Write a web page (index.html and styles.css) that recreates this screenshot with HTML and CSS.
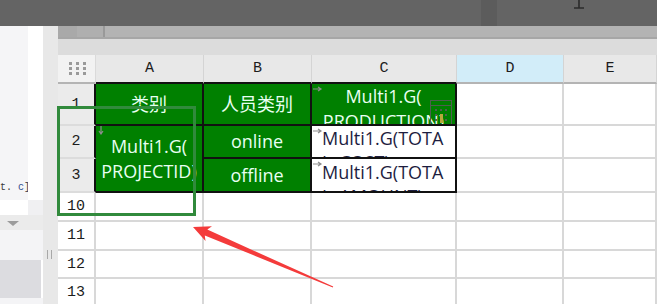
FILE: index.html
```html
<!DOCTYPE html>
<html lang="en">
<head>
    <meta charset="UTF-8">
    <meta name="viewport" content="width=device-width, initial-scale=1.0">
    <title>Sheet</title>
    <link rel="stylesheet" href="styles.css">
</head>
<body>
    <div class="topbar">
        <div class="topbar-tab"></div>
        <svg class="topbar-mark" width="12" height="9" viewBox="0 0 12 9"><path d="M6 0V8M1 8H11" stroke="#2b2b2b" stroke-width="1.6" fill="none"/></svg>
    </div>
    <div class="main">
        <div class="side">
            <div class="side-top">
                <div class="side-code"><span class="code-line"><span class="code-dark">t.</span> <span class="code-blue">c</span><span class="code-dark">]</span></span></div>
                <div class="side-white"></div>
            </div>
            <div class="side-row2"><div class="side-w"></div><div class="side-g"></div></div>
            <div class="side-drop"><span class="tri"></span></div>
            <div class="side-light"></div>
            <div class="side-box"></div>
            <div class="side-rest"></div>
        </div>
        <div class="splitter"><span class="grip"></span></div>
        <div class="sheet">
            <div class="sheet-toolbar">
                <div class="tb-first"></div>
                <div class="tb-second"></div>
            </div>
            <div class="sheet-sub"></div>
            <div class="grid">
                <div class="corner">
                    <svg width="18" height="14" viewBox="0 0 18 14">
                        <g fill="#9a9a9a">
                            <rect x="0" y="0" width="3" height="3"/><rect x="7" y="0" width="3" height="3"/><rect x="14" y="0" width="3" height="3"/>
                            <rect x="0" y="5" width="3" height="3"/><rect x="7" y="5" width="3" height="3"/><rect x="14" y="5" width="3" height="3"/>
                            <rect x="0" y="10" width="3" height="3"/><rect x="7" y="10" width="3" height="3"/><rect x="14" y="10" width="3" height="3"/>
                        </g>
                    </svg>
                </div>
                <div class="colhead edge">A</div>
                <div class="colhead edge">B</div>
                <div class="colhead edge">C</div>
                <div class="colhead active">D</div>
                <div class="colhead">E</div>

                <div class="rowhead sel">1</div>
                <div class="cell g">类别</div>
                <div class="cell g">人员类别</div>
                <div class="cell g g-top">
                    <svg class="mark-right" width="10" height="6" viewBox="0 0 10 6"><path d="M0 3H7M5 1L8 3L5 5" stroke="#8c8c8c" stroke-width="1.2" fill="none"/></svg>
                    <div>Multi1.G(<br>PRODUCTION)</div>
                    <svg class="cal" width="23" height="26" viewBox="0 0 23 26">
                        <rect x="0.5" y="0.5" width="21" height="25" fill="none" stroke="#4f5f4f"/>
                        <path d="M1 5.5H21" stroke="#4f5f4f"/>
                        <g fill="#4f5f4f">
                            <rect x="5" y="9" width="2" height="2"/><rect x="10" y="9" width="2" height="2"/><rect x="15" y="9" width="2" height="2"/>
                            <rect x="5" y="14" width="2" height="2"/><rect x="10" y="14" width="2" height="2"/><rect x="15" y="14" width="2" height="2"/>
                            <rect x="5" y="19" width="2" height="2"/><rect x="10" y="19" width="2" height="2"/><rect x="15" y="19" width="2" height="2"/>
                        </g>
                        <rect x="10" y="14" width="3" height="9" fill="#b8a83c"/>
                    </svg>
                </div>
                <div class="cell"></div>
                <div class="cell"></div>

                <div class="rowhead sel">2</div>
                <div class="cell g merged">
                    <svg class="mark-down" width="6" height="9" viewBox="0 0 6 9"><path d="M3 0V7M1 5L3 8L5 5" stroke="#8c8c8c" stroke-width="1.2" fill="none"/></svg>
                    <div>Multi1.G(<br>PROJECTID)</div>
                </div>
                <div class="cell g">online</div>
                <div class="cell bx">
                    <svg class="mark-right" width="10" height="6" viewBox="0 0 10 6"><path d="M0 3H7M5 1L8 3L5 5" stroke="#8c8c8c" stroke-width="1.2" fill="none"/></svg>
                    Multi1.G(TOTA<br>L_COST)
                </div>
                <div class="cell"></div>
                <div class="cell"></div>

                <div class="rowhead sel">3</div>
                <div class="cell g">offline</div>
                <div class="cell bx bx-low">
                    <svg class="mark-right" width="10" height="6" viewBox="0 0 10 6"><path d="M0 3H7M5 1L8 3L5 5" stroke="#8c8c8c" stroke-width="1.2" fill="none"/></svg>
                    Multi1.G(TOTA<br>L_AMOUNT)
                </div>
                <div class="cell"></div>
                <div class="cell"></div>

                <div class="rowhead">10</div>
                <div class="cell"></div><div class="cell"></div><div class="cell"></div><div class="cell"></div><div class="cell"></div>
                <div class="rowhead">11</div>
                <div class="cell"></div><div class="cell"></div><div class="cell"></div><div class="cell"></div><div class="cell"></div>
                <div class="rowhead">12</div>
                <div class="cell"></div><div class="cell"></div><div class="cell"></div><div class="cell"></div><div class="cell"></div>
                <div class="rowhead">13</div>
                <div class="cell"></div><div class="cell"></div><div class="cell"></div><div class="cell"></div><div class="cell"></div>
            </div>
        </div>
    </div>

    <div class="sel-frame"></div>
    <svg class="red-arrow" width="146" height="70" viewBox="0 0 146 70">
        <polygon points="3,5 22,4.3 17.3,7.6 143.2,64.6 142.8,65.4 14.8,13.4 15.5,19" fill="#f43b3b"/>
    </svg>
</body>
</html>
```

FILE: styles.css
```css
* {
    box-sizing: border-box;
}

body {
    margin: 0;
    width: 657px;
    height: 304px;
    overflow: hidden;
    position: relative;
    background: #fff;
    font-family: "Open Sans", "Noto Sans CJK SC", sans-serif;
}

/* top dark strip */
.topbar {
    height: 26px;
    background: #646464;
    display: flex;
    align-items: flex-start;
}

.topbar-tab {
    width: 16px;
    height: 26px;
    margin-left: 481px;
    background: #5c5c5c;
}

.topbar-mark {
    margin-left: 76px;
}

.main {
    display: flex;
    height: 278px;
}

/* left panel */
.side {
    width: 43px;
    display: flex;
    flex-direction: column;
}

.side-top {
    height: 174px;
    display: flex;
}

.side-code {
    width: 28px;
    background: #f5f5f7;
    display: flex;
    align-items: flex-end;
    padding-bottom: 7px;
    font-family: "Liberation Mono", monospace;
    font-size: 10px;
    overflow: hidden;
}

.code-line {
    white-space: pre;
}

.code-dark {
    color: #3a3a3a;
}

.code-blue {
    color: #2d4c8c;
}

.side-white {
    flex: 1;
    background: #fff;
}

.side-row2 {
    height: 15px;
    display: flex;
}

.side-w {
    width: 28px;
    background: #fff;
}

.side-g {
    flex: 1;
    background: #f0f0f2;
}

.side-drop {
    height: 15px;
    background: #ebebeb;
    padding: 6px 0 0 7px;
}

.tri {
    display: block;
    width: 0;
    height: 0;
    border-left: 6px solid transparent;
    border-right: 6px solid transparent;
    border-top: 5px solid #9c9c9c;
}

.side-light {
    height: 30px;
    background: #f4f4f6;
}

.side-box {
    height: 38px;
    width: 41px;
    background: #dcdce0;
}

.side-rest {
    flex: 1;
    background: #f4f4f6;
}

.splitter {
    width: 15px;
    background: #e8e8e8;
    padding: 224px 0 0 4px;
}

.grip {
    display: block;
    width: 5px;
    height: 9px;
    border-left: 1px solid #a8a8a8;
    border-right: 1px solid #a8a8a8;
}

/* sheet */
.sheet {
    flex: 1;
    overflow: hidden;
}

.sheet-toolbar {
    height: 13px;
    display: flex;
    background: #b3b3b3;
    border-bottom: 2px solid #a6a6a6;
}

.tb-first {
    width: 19px;
    background: #a9a9a9;
}

.tb-second {
    width: 28px;
    background: #afafaf;
    border-right: 2px solid #999;
}

.sheet-sub {
    height: 16px;
    background: #dcdcdc;
}

.grid {
    display: grid;
    grid-template-columns: 38px 108px 108px 145px 107px 1fr;
    grid-template-rows: 29px 42px 33px 34px 29px 29px 28px 28px;
}

.corner {
    background: #f2f2f2;
    border-right: 1px solid #dadada;
    border-bottom: 2px solid #b4b4b4;
    display: flex;
    align-items: center;
    justify-content: center;
    padding-left: 2px;
}

.colhead {
    background: #e8e8e8;
    border-right: 1px solid #d4d4d4;
    border-bottom: 2px solid #b4b4b4;
    display: flex;
    align-items: center;
    justify-content: center;
    font-family: "Liberation Mono", monospace;
    font-size: 15px;
    color: #1c1c1c;
}

.colhead.edge {
    border-bottom-color: #111;
}

.colhead.active {
    background: #d2edf9;
}

.rowhead {
    background: #fff;
    border-right: 2px solid #d8d8d8;
    border-bottom: 2px solid #d8d8d8;
    display: flex;
    align-items: center;
    justify-content: center;
    font-family: "Liberation Mono", monospace;
    font-size: 15px;
    color: #1c1c1c;
}

.rowhead.sel {
    background: #ebebeb;
    border-right-color: #111;
    border-bottom-color: #dcdcdc;
}

.cell {
    position: relative;
    overflow: hidden;
    border-right: 2px solid #d8d8d8;
    border-bottom: 2px solid #d8d8d8;
}

.g {
    background: #008000;
    color: #e8fff2;
    border-right-color: #111;
    border-bottom-color: #111;
    font-size: 18px;
    line-height: 25px;
    text-align: center;
    display: flex;
    align-items: center;
    justify-content: center;
    white-space: nowrap;
}

.g-top {
    align-items: flex-start;
}

.merged {
    grid-row: span 2;
}

.bx {
    background: #fff;
    color: #1d1d3f;
    border-right-color: #111;
    border-bottom-color: #111;
    font-size: 18px;
    line-height: 24px;
    padding-left: 10px;
    white-space: nowrap;
}

.bx-low {
    padding-top: 1px;
}

/* small corner marks over cells */
.mark-right {
    position: absolute;
    left: 1px;
    top: 2px;
}

.mark-down {
    position: absolute;
    left: 2px;
    top: 0;
}

.cal {
    position: absolute;
    left: 118px;
    top: 16px;
}

/* overlays */
.sel-frame {
    position: absolute;
    left: 57px;
    top: 106px;
    width: 139px;
    height: 110px;
    border: 3px solid #318a3c;
}

.red-arrow {
    position: absolute;
    left: 190px;
    top: 222px;
}
```
